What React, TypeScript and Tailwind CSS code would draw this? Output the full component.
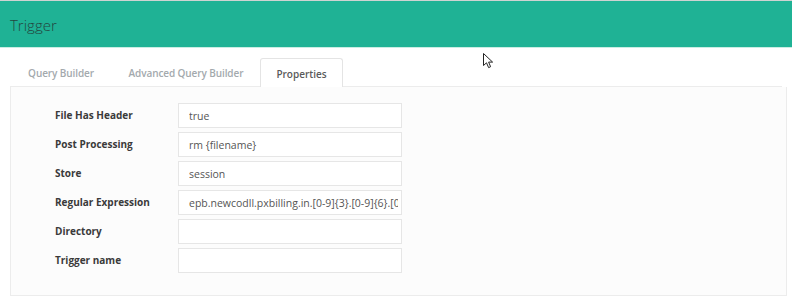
import React from "react";

const rows = [
  { label: "File Has Header", value: "true" },
  { label: "Post Processing", value: "rm {filename}" },
  { label: "Store", value: "session" },
  { label: "Regular Expression", value: "epb.newcodll.pxbilling.in.[0-9]{3}.[0-9]{6}.[0-9]{4}.csv" },
  { label: "Directory", value: "" },
  { label: "Trigger name", value: "" },
];

const tabs = [
  { name: "Query Builder", width: "w-[102px]" },
  { name: "Advanced Query Builder", width: "w-[148px]" },
];

const App = () => {
  return (
    <div
      className="relative w-[792px] h-[306px] bg-white overflow-hidden"
      style={{ fontFamily: '"Open Sans", "Liberation Sans", sans-serif' }}
    >
      {/* Header */}
      <div className="border-t border-[#cfd3d2] bg-[#1fb295] h-[48px] border-b border-b-[#c9ede3] flex items-center pl-[10px]">
        <span className="text-[15px] font-light text-[#24463f] mt-[2px]">Trigger</span>
      </div>

      {/* Tabs */}
      <div className="mt-[10px] px-[10px]">
        <div className="flex h-[29px] border-b border-[#ececec]">
          {tabs.map((t) => (
            <div
              key={t.name}
              className={`${t.width} flex items-center justify-center pt-[3px] text-[10px] font-semibold tracking-[-0.1px] text-[#a3a9ad]`}
            >
              {t.name}
            </div>
          ))}
          <div className="w-[83px] -mb-px bg-white border border-b-0 border-[#e4e4e4] rounded-t-[3px] flex items-center justify-center pt-[3px] text-[10px] font-semibold text-[#5a5a5a]">
            Properties
          </div>
        </div>

        {/* Panel */}
        <div className="w-[777px] h-[209px] bg-[#fcfcfc] border border-t-0 border-[#ececec] pt-[16px] pl-[44px] flex flex-col gap-[4px]">
          {rows.map((r) => (
            <div key={r.label} className="flex items-center h-[25px]">
              <div className="w-[123px] text-[10px] font-bold text-[#3a3a3a]">{r.label}</div>
              <input
                readOnly
                value={r.value}
                className="w-[224px] h-[25px] bg-white border border-[#e6e6e6] pl-[10px] pr-[3px] pt-[1px] text-[10.5px] text-[#555] outline-none"
                style={{ fontFamily: '"Open Sans", "Liberation Sans", sans-serif' }}
              />
            </div>
          ))}
        </div>
      </div>

      {/* Mouse pointer */}
      <svg
        className="absolute left-[483px] top-[53px]"
        width="12"
        height="16"
        viewBox="0 0 12 16"
      >
        <path
          d="M0.5 0.5 L0.5 12.5 L3.5 9.8 L5.6 14.6 L7.6 13.7 L5.6 9.1 L9.6 9.1 Z"
          fill="#fff"
          stroke="#222"
          strokeWidth="1"
          strokeLinejoin="miter"
        />
      </svg>
    </div>
  );
};

export default App;
